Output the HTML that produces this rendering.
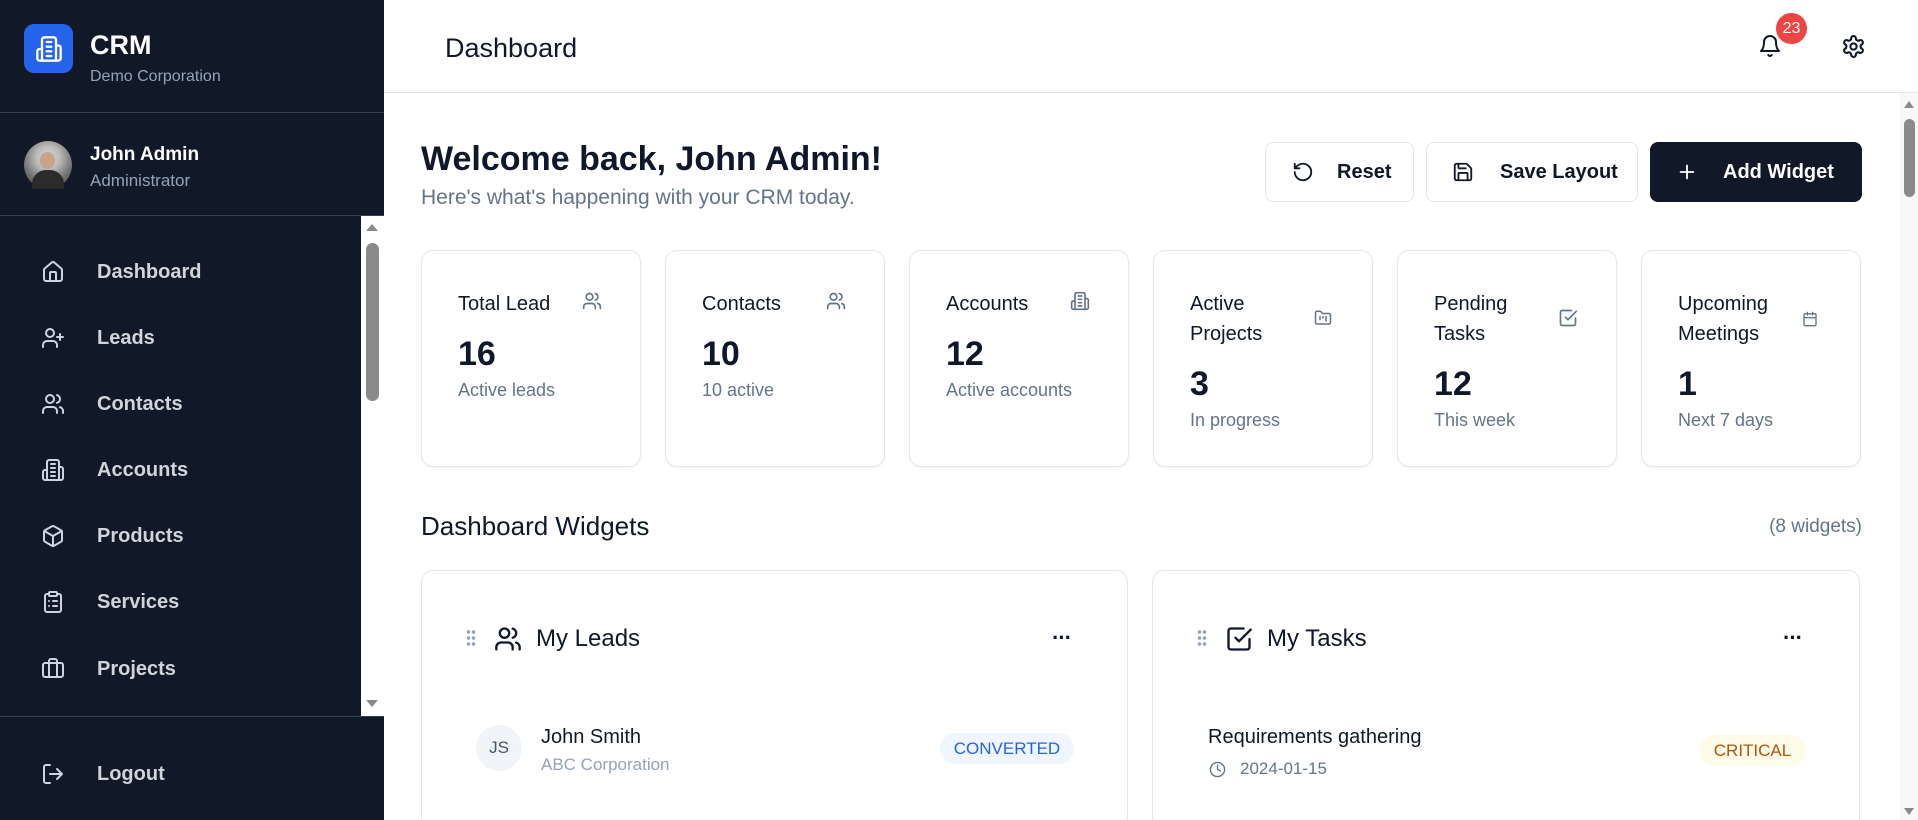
<!DOCTYPE html>
<html style="overflow:hidden;height:820px"><head><meta charset="utf-8"><style>
*{box-sizing:border-box;margin:0;padding:0}
body{width:1918px;height:820px;overflow:hidden;font-family:"Liberation Sans",sans-serif;background:#fff;position:relative;color:#0f172a}
.sb{position:absolute;left:0;top:0;width:384px;height:820px;background:#111827;color:#fff}
.abs{position:absolute}
svg{display:block}
.ico{fill:none;stroke:currentColor;stroke-width:2;stroke-linecap:round;stroke-linejoin:round}
.nav{position:absolute;left:0;width:364px;height:40px;display:flex;align-items:center;color:#d1d5db;font-size:20px;font-weight:bold}
.nav svg{position:absolute;left:41px;width:24px;height:24px;color:#cbd5e1}
.nav span{position:absolute;left:97px}
.card{position:absolute;top:250px;width:220px;height:217px;border:1px solid #e2e8f0;border-radius:12px;box-shadow:0 1px 2px rgba(0,0,0,.05)}
.card .t{position:absolute;left:36px;top:38px;font-size:20px;line-height:30px;color:#0f172a;width:120px}
.card .i{position:absolute;left:160px;width:20px;height:20px;color:#64748b}
.card .n{position:absolute;left:36px;font-size:34px;font-weight:bold}
.card .s{position:absolute;left:36px;font-size:18px;color:#64748b}
.btn{position:absolute;top:142px;height:60px;border:1px solid #e2e8f0;border-radius:8px;display:flex;align-items:center;font-size:20px;font-weight:bold;color:#0f172a}
.w{position:absolute;top:570px;height:260px;border:1px solid #e2e8f0;border-radius:12px}
</style></head><body>
<div class="sb">
  <div class="abs" style="left:24px;top:24px;width:49px;height:49px;background:#2563eb;border-radius:10px;display:flex;align-items:center;justify-content:center">
    <svg width="28" height="28" viewBox="0 0 24 24" class="ico" style="color:#fff"><path d="M6 22V4a2 2 0 0 1 2-2h8a2 2 0 0 1 2 2v18Z"/><path d="M6 12H4a2 2 0 0 0-2 2v6a2 2 0 0 0 2 2h2"/><path d="M18 9h2a2 2 0 0 1 2 2v9a2 2 0 0 1-2 2h-2"/><path d="M10 6h4M10 10h4M10 14h4M10 18h4"/></svg>
  </div>
  <div class="abs" style="left:90px;top:30px;font-size:27px;font-weight:bold">CRM</div>
  <div class="abs" style="left:90px;top:68px;font-size:16px;color:#94a3b8">Demo Corporation</div>
  <div class="abs" style="left:0;top:112px;width:384px;height:1px;background:#334155"></div>
  <div class="abs" style="left:24px;top:141px;width:48px;height:48px;border-radius:50%;background:radial-gradient(circle at 50% 35%,#d6d6d6 0,#bbb 30%,#777 60%,#3a3a3a 100%)"></div>
  <div class="abs" style="left:40px;top:152px;width:15px;height:17px;border-radius:50%;background:#caa38a"></div>
  <div class="abs" style="left:32px;top:170px;width:32px;height:19px;border-radius:14px 14px 0 0;background:#2b2b2b"></div>
  <div class="abs" style="left:90px;top:144px;font-size:19px;font-weight:bold">John Admin</div>
  <div class="abs" style="left:90px;top:171px;font-size:17px;color:#94a3b8">Administrator</div>
  <div class="abs" style="left:0;top:215px;width:384px;height:1px;background:#334155"></div>
  <div class="abs" style="left:361px;top:216px;width:23px;height:500px;background:#fff"></div>
  <div class="abs" style="left:366px;top:243px;width:13px;height:158px;background:#8a8a8a;border-radius:7px"></div>
  <div class="abs" style="left:366px;top:224px;width:0;height:0;border-left:6px solid transparent;border-right:6px solid transparent;border-bottom:7px solid #8a8a8a"></div>
  <div class="abs" style="left:366px;top:700px;width:0;height:0;border-left:6px solid transparent;border-right:6px solid transparent;border-top:7px solid #8a8a8a"></div>
  <div class="nav" style="top:252px"><svg viewBox="0 0 24 24" class="ico"><path d="M15 21v-8a1 1 0 0 0-1-1h-4a1 1 0 0 0-1 1v8"/><path d="M3 10a2 2 0 0 1 .7-1.5l7-6a2 2 0 0 1 2.6 0l7 6A2 2 0 0 1 21 10v9a2 2 0 0 1-2 2H5a2 2 0 0 1-2-2z"/></svg><span>Dashboard</span></div>
  <div class="nav" style="top:318px"><svg viewBox="0 0 24 24" class="ico"><path d="M16 21v-2a4 4 0 0 0-4-4H6a4 4 0 0 0-4 4v2"/><circle cx="9" cy="7" r="4"/><path d="M19 8v6M22 11h-6"/></svg><span>Leads</span></div>
  <div class="nav" style="top:384px"><svg viewBox="0 0 24 24" class="ico"><path d="M16 21v-2a4 4 0 0 0-4-4H6a4 4 0 0 0-4 4v2"/><circle cx="9" cy="7" r="4"/><path d="M22 21v-2a4 4 0 0 0-3-3.87M16 3.13a4 4 0 0 1 0 7.75"/></svg><span>Contacts</span></div>
  <div class="nav" style="top:450px"><svg viewBox="0 0 24 24" class="ico"><path d="M6 22V4a2 2 0 0 1 2-2h8a2 2 0 0 1 2 2v18Z"/><path d="M6 12H4a2 2 0 0 0-2 2v6a2 2 0 0 0 2 2h2M18 9h2a2 2 0 0 1 2 2v9a2 2 0 0 1-2 2h-2M10 6h4M10 10h4M10 14h4M10 18h4"/></svg><span>Accounts</span></div>
  <div class="nav" style="top:516px"><svg viewBox="0 0 24 24" class="ico"><path d="M21 8a2 2 0 0 0-1-1.730l-7-4a2 2 0 0 0-2 0l-7 4A2 2 0 0 0 3 8v8a2 2 0 0 0 1 1.73l7 4a2 2 0 0 0 2 0l7-4A2 2 0 0 0 21 16Z"/><path d="m3.3 7 8.7 5 8.7-5M12 22V12"/></svg><span>Products</span></div>
  <div class="nav" style="top:582px"><svg viewBox="0 0 24 24" class="ico"><rect x="8" y="2" width="8" height="4" rx="1"/><path d="M16 4h2a2 2 0 0 1 2 2v14a2 2 0 0 1-2 2H6a2 2 0 0 1-2-2V6a2 2 0 0 1 2-2h2M12 11h4M12 16h4M8 11h.01M8 16h.01"/></svg><span>Services</span></div>
  <div class="nav" style="top:649px"><svg viewBox="0 0 24 24" class="ico"><path d="M16 20V4a2 2 0 0 0-2-2h-4a2 2 0 0 0-2 2v16"/><rect x="2" y="6" width="20" height="14" rx="2"/></svg><span>Projects</span></div>
  <div class="abs" style="left:0;top:716px;width:384px;height:1px;background:#334155"></div>
  <div class="nav" style="top:754px"><svg viewBox="0 0 24 24" class="ico"><path d="M9 21H5a2 2 0 0 1-2-2V5a2 2 0 0 1 2-2h4M16 17l5-5-5-5M21 12H9"/></svg><span>Logout</span></div>
</div>

<div class="abs" style="left:384px;top:92px;width:1534px;height:1px;background:#e5e7eb"></div>
<div class="abs" style="left:445px;top:33px;font-size:27px;color:#0f172a">Dashboard</div>
<svg class="abs ico" style="left:1758px;top:34px;color:#0f172a" width="24" height="24" viewBox="0 0 24 24"><path d="M6 8a6 6 0 0 1 12 0c0 7 3 9 3 9H3s3-2 3-9M10.3 21a1.94 1.94 0 0 0 3.4 0"/></svg>
<div class="abs" style="left:1776px;top:13px;width:31px;height:31px;border-radius:50%;background:#ef4444;color:#fff;font-size:16px;display:flex;align-items:center;justify-content:center">23</div>
<svg class="abs ico" style="left:1841px;top:34px;color:#0f172a" width="25" height="25" viewBox="0 0 24 24"><path d="M12.22 2h-.44a2 2 0 0 0-2 2v.18a2 2 0 0 1-1 1.73l-.43.25a2 2 0 0 1-2 0l-.15-.08a2 2 0 0 0-2.730.73l-.22.38a2 2 0 0 0 .73 2.73l.15.1a2 2 0 0 1 1 1.72v.51a2 2 0 0 1-1 1.74l-.15.09a2 2 0 0 0-.73 2.73l.22.38a2 2 0 0 0 2.73.73l.15-.08a2 2 0 0 1 2 0l.43.25a2 2 0 0 1 1 1.73V20a2 2 0 0 0 2 2h.44a2 2 0 0 0 2-2v-.18a2 2 0 0 1 1-1.73l.43-.25a2 2 0 0 1 2 0l.15.08a2 2 0 0 0 2.73-.73l.22-.39a2 2 0 0 0-.73-2.73l-.15-.08a2 2 0 0 1-1-1.74v-.5a2 2 0 0 1 1-1.74l.15-.09a2 2 0 0 0 .73-2.73l-.22-.38a2 2 0 0 0-2.73-.73l-.15.08a2 2 0 0 1-2 0l-.43-.25a2 2 0 0 1-1-1.73V4a2 2 0 0 0-2-2z"/><circle cx="12" cy="12" r="3"/></svg>

<div class="abs" style="left:1900px;top:93px;width:18px;height:727px;background:#f8f8f8"></div>
<div class="abs" style="left:1904px;top:119px;width:11px;height:78px;background:#8a8a8a;border-radius:6px"></div>
<div class="abs" style="left:1904px;top:101px;border-left:5px solid transparent;border-right:5px solid transparent;border-bottom:7px solid #8a8a8a"></div>
<div class="abs" style="left:1904px;top:808px;border-left:5px solid transparent;border-right:5px solid transparent;border-top:7px solid #8a8a8a"></div>

<div class="abs" style="left:421px;top:140px;font-size:34px;font-weight:bold;color:#0f172a">Welcome back, John Admin!</div>
<div class="abs" style="left:421px;top:186px;font-size:21px;color:#64748b">Here's what's happening with your CRM today.</div>

<div class="btn" style="left:1265px;width:149px"><svg class="abs ico" style="left:26px" width="22" height="22" viewBox="0 0 24 24"><path d="M3 12a9 9 0 1 0 9-9 9.75 9.75 0 0 0-6.74 2.74L3 8"/><path d="M3 3v5h5"/></svg><span class="abs" style="left:71px">Reset</span></div>
<div class="btn" style="left:1426px;width:212px"><svg class="abs ico" style="left:25px" width="22" height="22" viewBox="0 0 24 24"><path d="M15.2 3a2 2 0 0 1 1.4.6l3.8 3.8a2 2 0 0 1 .6 1.4V19a2 2 0 0 1-2 2H5a2 2 0 0 1-2-2V5a2 2 0 0 1 2-2z"/><path d="M17 21v-7a1 1 0 0 0-1-1H8a1 1 0 0 0-1 1v7M7 3v4a1 1 0 0 0 1 1h7"/></svg><span class="abs" style="left:73px">Save Layout</span></div>
<div class="btn" style="left:1650px;width:212px;background:#111827;border-color:#111827;color:#fff"><svg class="abs ico" style="left:25px" width="22" height="22" viewBox="0 0 24 24"><path d="M5 12h14M12 5v14"/></svg><span class="abs" style="left:72px">Add Widget</span></div>

<div class="card" style="left:421px"><div class="t">Total Lead</div><svg class="i ico" style="top:40px" viewBox="0 0 24 24"><path d="M16 21v-2a4 4 0 0 0-4-4H6a4 4 0 0 0-4 4v2"/><circle cx="9" cy="7" r="4"/><path d="M22 21v-2a4 4 0 0 0-3-3.87M16 3.13a4 4 0 0 1 0 7.75"/></svg><div class="n" style="top:84px">16</div><div class="s" style="top:129px">Active leads</div></div>
<div class="card" style="left:665px"><div class="t">Contacts</div><svg class="i ico" style="top:40px" viewBox="0 0 24 24"><path d="M16 21v-2a4 4 0 0 0-4-4H6a4 4 0 0 0-4 4v2"/><circle cx="9" cy="7" r="4"/><path d="M22 21v-2a4 4 0 0 0-3-3.87M16 3.13a4 4 0 0 1 0 7.75"/></svg><div class="n" style="top:84px">10</div><div class="s" style="top:129px">10 active</div></div>
<div class="card" style="left:909px"><div class="t">Accounts</div><svg class="i ico" style="top:40px" viewBox="0 0 24 24"><path d="M6 22V4a2 2 0 0 1 2-2h8a2 2 0 0 1 2 2v18Z"/><path d="M6 12H4a2 2 0 0 0-2 2v6a2 2 0 0 0 2 2h2M18 9h2a2 2 0 0 1 2 2v9a2 2 0 0 1-2 2h-2M10 6h4M10 10h4M10 14h4M10 18h4"/></svg><div class="n" style="top:84px">12</div><div class="s" style="top:129px">Active accounts</div></div>
<div class="card" style="left:1153px"><div class="t">Active Projects</div><svg class="i ico" style="top:57px;width:18px" viewBox="0 0 24 24"><path d="M4 20h16a2 2 0 0 0 2-2V8a2 2 0 0 0-2-2h-7.9a2 2 0 0 1-1.7-.9l-.8-1.2A2 2 0 0 0 7.9 3H4a2 2 0 0 0-2 2v13a2 2 0 0 0 2 2ZM8 10v4M12 10v2M16 10v6"/></svg><div class="n" style="top:114px">3</div><div class="s" style="top:159px">In progress</div></div>
<div class="card" style="left:1397px"><div class="t">Pending Tasks</div><svg class="i ico" style="top:57px" viewBox="0 0 24 24"><path d="m9 11 3 3L22 4"/><path d="M21 12v7a2 2 0 0 1-2 2H5a2 2 0 0 1-2-2V5a2 2 0 0 1 2-2h11"/></svg><div class="n" style="top:114px">12</div><div class="s" style="top:159px">This week</div></div>
<div class="card" style="left:1641px"><div class="t">Upcoming Meetings</div><svg class="i ico" style="top:58px;width:16px" viewBox="0 0 24 24"><path d="M8 2v4M16 2v4"/><rect x="3" y="4" width="18" height="18" rx="2"/><path d="M3 10h18"/></svg><div class="n" style="top:114px">1</div><div class="s" style="top:159px">Next 7 days</div></div>

<div class="abs" style="left:421px;top:511px;font-size:26px;color:#0f172a">Dashboard Widgets</div>
<div class="abs" style="right:56px;top:516px;font-size:19px;color:#64748b">(8 widgets)</div>

<div class="w" style="left:421px;width:707px">
  <div class="abs" style="left:44px;top:58px;width:10px;height:18px;background:radial-gradient(circle,#94a3b8 1.6px,transparent 2px) 0 0/5px 6px"></div>
  <svg class="abs ico" style="left:72px;top:54px;color:#0f172a" width="28" height="28" viewBox="0 0 24 24"><path d="M16 21v-2a4 4 0 0 0-4-4H6a4 4 0 0 0-4 4v2"/><circle cx="9" cy="7" r="4"/><path d="M22 21v-2a4 4 0 0 0-3-3.87M16 3.13a4 4 0 0 1 0 7.75"/></svg>
  <div class="abs" style="left:114px;top:54px;font-size:24px">My Leads</div>
  <div class="abs" style="left:630px;top:54px;font-size:22px;font-weight:bold;letter-spacing:-1px">···</div>
  <div class="abs" style="left:54px;top:154px;width:46px;height:46px;border-radius:50%;background:#f1f5f9;color:#475569;font-size:17px;display:flex;align-items:center;justify-content:center">JS</div>
  <div class="abs" style="left:119px;top:155px;font-size:20px">John Smith</div>
  <div class="abs" style="left:119px;top:184px;font-size:17px;color:#94a3b8">ABC Corporation</div>
  <div class="abs" style="left:518px;top:162px;width:134px;height:31px;border-radius:16px;background:#eff6ff;color:#2563eb;font-size:17px;display:flex;align-items:center;justify-content:center">CONVERTED</div>
</div>
<div class="w" style="left:1152px;width:708px">
  <div class="abs" style="left:44px;top:58px;width:10px;height:18px;background:radial-gradient(circle,#94a3b8 1.6px,transparent 2px) 0 0/5px 6px"></div>
  <svg class="abs ico" style="left:72px;top:54px;color:#0f172a" width="28" height="28" viewBox="0 0 24 24"><path d="m9 11 3 3L22 4"/><path d="M21 12v7a2 2 0 0 1-2 2H5a2 2 0 0 1-2-2V5a2 2 0 0 1 2-2h11"/></svg>
  <div class="abs" style="left:114px;top:54px;font-size:24px">My Tasks</div>
  <div class="abs" style="left:630px;top:54px;font-size:22px;font-weight:bold;letter-spacing:-1px">···</div>
  <div class="abs" style="left:55px;top:155px;font-size:20px">Requirements gathering</div>
  <svg class="abs ico" style="left:56px;top:190px;color:#64748b" width="17" height="17" viewBox="0 0 24 24"><circle cx="12" cy="12" r="10"/><path d="M12 6v6l4 2"/></svg>
  <div class="abs" style="left:87px;top:188px;font-size:17px;color:#64748b">2024-01-15</div>
  <div class="abs" style="left:546px;top:164px;width:107px;height:31px;border-radius:16px;background:#fefce8;color:#b45309;font-size:17px;display:flex;align-items:center;justify-content:center">CRITICAL</div>
</div>
</body></html>
